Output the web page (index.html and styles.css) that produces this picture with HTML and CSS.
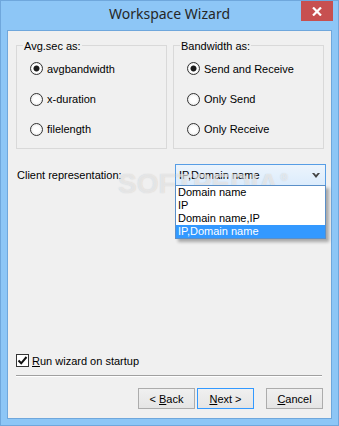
FILE: index.html
```html
<!DOCTYPE html>
<html>
<head>
<meta charset="utf-8">
<link rel="stylesheet" href="styles.css">
</head>
<body>
<div class="window">
  <div class="titlebar"><span class="title">Workspace Wizard</span></div>
  <div class="close"><svg width="10" height="9" viewBox="0 0 10 9"><path d="M1 0.5 L9 8.5 M9 0.5 L1 8.5" stroke="#fff" stroke-width="2.2"/></svg></div>
  <div class="client">
    <div class="groups">
      <fieldset class="group">
        <legend>Avg.sec as:</legend>
        <div class="opt first"><span class="radio on"></span>avgbandwidth</div>
        <div class="opt"><span class="radio"></span>x-duration</div>
        <div class="opt"><span class="radio"></span>filelength</div>
      </fieldset>
      <fieldset class="group">
        <legend>Bandwidth as:</legend>
        <div class="opt first"><span class="radio on"></span>Send and Receive</div>
        <div class="opt"><span class="radio"></span>Only Send</div>
        <div class="opt"><span class="radio"></span>Only Receive</div>
      </fieldset>
    </div>
    <div class="rep-row">
      <span class="rep-label">Client representation:</span>
      <div class="combo">
        <span class="combo-text">IP,Domain name</span>
        <svg class="chev" width="8" height="5" viewBox="0 0 8 5"><polygon points="0,0 2.2,0 4,2 5.8,0 8,0 4,5" fill="#444"/></svg>
        <ul class="list">
          <li>Domain name</li>
          <li>IP</li>
          <li>Domain name,IP</li>
          <li class="sel">IP,Domain name</li>
        </ul>
      </div>
    </div>
    <div class="watermark">SOFTPEDIA<span class="reg">®</span></div>
    <div class="check-row">
      <span class="checkbox"><svg width="11" height="11" viewBox="0 0 11 11"><path d="M1.5 5.5 L4.2 8.3 L9.5 2" fill="none" stroke="#111" stroke-width="2"/></svg></span>
      <span><u>R</u>un wizard on startup</span>
    </div>
    <div class="sep"></div>
    <div class="buttons">
      <button class="btn back">&lt; <u>B</u>ack</button>
      <button class="btn next"><u>N</u>ext &gt;</button>
      <button class="btn"><u>C</u>ancel</button>
    </div>
  </div>
</div>
</body>
</html>
```
FILE: styles.css
```css
* { box-sizing: border-box; }
body {
  margin: 0;
  font-family: "Liberation Sans", Arial, sans-serif;
  font-size: 11px;
  color: #000;
}
.window {
  position: relative;
  width: 339px;
  height: 426px;
  border: 1px solid #6fa7dc;
  background: #8dc6f6;
  padding: 0 6px 6px 6px;
  display: flex;
  flex-direction: column;
}
.titlebar {
  height: 29px;
  padding-top: 3px;
  text-align: center;
}
.title {
  font-family: "Noto Sans", "Open Sans", sans-serif;
  font-size: 14px;
  line-height: 20px;
  color: #262626;
}
.close {
  position: absolute;
  top: 0;
  right: 5px;
  width: 32px;
  height: 20px;
  background: #c75050;
  display: flex;
  align-items: center;
  justify-content: center;
}
.client {
  flex: 1;
  position: relative;
  border: 1px solid #6fa7dc;
  background: #f0f0f0;
  display: flex;
  flex-direction: column;
}
.groups {
  display: flex;
  gap: 6px;
  margin: 6px 0 0 8px;
}
.group {
  width: 151px;
  min-width: 0;
  margin: 0;
  border: 1px solid #d9d9d9;
  padding: 0 0 4px 13px;
}
.group legend {
  margin-left: -7px;
  padding: 2px 1px 0 1px;
  line-height: 14px;
}
.opt {
  height: 30px;
  display: flex;
  align-items: center;
  white-space: nowrap;
}
.opt.first { height: 31px; }
.radio {
  width: 13px;
  height: 13px;
  border-radius: 50%;
  border: 1px solid #333;
  background: radial-gradient(circle, #fff 0, #fff 3px, #e8e8e8 6px);
  margin-right: 4px;
  flex: none;
}
.radio.on {
  background: radial-gradient(circle, #1c1c1c 0, #1c1c1c 2.6px, #fff 3.4px, #fff 4px, #e8e8e8 6px);
}
.rep-row {
  display: flex;
  align-items: center;
  margin: 15px 5px 0 9px;
}
.rep-label { flex: 1; }
.combo {
  position: relative;
  width: 151px;
  height: 22px;
  border: 1px solid #569de5;
  background: linear-gradient(#ecf4fc, #dcecfc);
  display: flex;
  align-items: center;
  padding: 0 5px 0 3px;
}
.combo-text { flex: 1; }
.chev { flex: none; }
.list {
  position: absolute;
  top: 100%;
  left: -1px;
  width: 151px;
  margin: 0;
  padding: 0;
  list-style: none;
  background: #fff;
  border: 1px solid #5a8fc8;
  box-shadow: 3px 3px 3px rgba(0, 0, 0, 0.3);
  z-index: 2;
}
.list li {
  height: 13px;
  line-height: 13px;
  padding-left: 2px;
}
.list li.sel {
  background: #3399ff;
  color: #fff;
}
.watermark {
  position: absolute;
  left: 110px;
  top: 137px;
  font-family: "Liberation Sans", Arial, sans-serif;
  font-weight: bold;
  font-size: 28px;
  color: rgba(255, 255, 255, 0.55);
  text-shadow: 0 0 1px rgba(120, 120, 120, 0.35);
  pointer-events: none;
  z-index: 1;
}
.watermark .reg {
  font-size: 10px;
  vertical-align: 12px;
  margin-left: 2px;
}
.check-row {
  margin: auto 0 0 8px;
  height: 13px;
  display: flex;
  align-items: center;
}
.checkbox {
  width: 13px;
  height: 13px;
  border: 1px solid #333;
  background: #fff;
  margin-right: 3px;
  display: flex;
  align-items: center;
  justify-content: center;
}
.sep {
  margin: 8px 9px 0 8px;
  height: 2px;
  border-top: 1px solid #a0a0a0;
  border-bottom: 1px solid #fff;
}
.buttons {
  display: flex;
  justify-content: flex-end;
  margin: 11px 8px 9px 0;
}
.btn {
  width: 57px;
  height: 21px;
  padding: 0;
  border: 1px solid #acacac;
  background: linear-gradient(#f0f0f0, #e5e5e5);
  font-family: "Liberation Sans", Arial, sans-serif;
  font-size: 11px;
  color: #000;
}
.btn.back { margin-right: 2px; }
.btn.next { margin-right: 12px; border-color: #3399ff; }
```
